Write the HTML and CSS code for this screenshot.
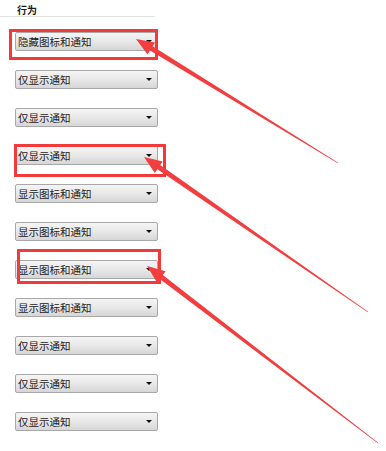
FILE: index.html
```html
<!DOCTYPE html>
<html lang="zh">
<head>
<meta charset="utf-8">
<link rel="stylesheet" href="styles.css">
</head>
<body>
<div class="page">
  <div class="header">行为</div>
  <div class="list">
    <div class="select"><span>隐藏图标和通知</span><i class="caret"></i></div>
    <div class="select"><span>仅显示通知</span><i class="caret"></i></div>
    <div class="select"><span>仅显示通知</span><i class="caret"></i></div>
    <div class="select"><span>仅显示通知</span><i class="caret"></i></div>
    <div class="select"><span>显示图标和通知</span><i class="caret"></i></div>
    <div class="select"><span>显示图标和通知</span><i class="caret"></i></div>
    <div class="select"><span>显示图标和通知</span><i class="caret"></i></div>
    <div class="select"><span>显示图标和通知</span><i class="caret"></i></div>
    <div class="select"><span>仅显示通知</span><i class="caret"></i></div>
    <div class="select"><span>仅显示通知</span><i class="caret"></i></div>
    <div class="select"><span>仅显示通知</span><i class="caret"></i></div>
  </div>
  <svg class="annot" width="386" height="451" viewBox="0 0 386 451" xmlns="http://www.w3.org/2000/svg">
    <g fill="none" stroke="#f33a3a" stroke-width="3">
      <rect x="10.5" y="30.5" width="146" height="28"/>
      <rect x="15.5" y="145.5" width="149" height="30"/>
      <rect x="18.5" y="250.5" width="141" height="32"/>
    </g>
    <g fill="#f23e3e">
      <polygon points="136,39 155.0,42.4 152.6,46.3 338.2,162.7 337.8,163.3 150.0,50.5 147.6,54.4"/>
      <polygon points="144,157 162.8,161.5 160.2,165.1 368.2,311.7 367.8,312.3 157.4,169.3 154.8,173.0"/>
      <polygon points="147,266 165.6,271.3 162.8,274.9 378.2,442.7 377.8,443.3 159.8,278.9 157.0,282.5"/>
    </g>
  </svg>
</div>
</body>
</html>
```
FILE: styles.css
```css
html, body {
  margin: 0;
  padding: 0;
  background: #ffffff;
}
.page {
  position: relative;
  width: 386px;
  height: 451px;
  overflow: hidden;
  font-family: "Noto Sans CJK SC", "Microsoft YaHei", sans-serif;
}
.header {
  box-sizing: border-box;
  width: 155px;
  height: 17px;
  padding: 3px 0 0 17px;
  border-bottom: 1px solid #e2e2e2;
  font-size: 10px;
  line-height: 13px;
  font-weight: bold;
  color: #1e1e1e;
}
.list {
  display: flex;
  flex-direction: column;
  gap: 19px;
  padding: 15px 0 0 15px;
}
.select {
  box-sizing: border-box;
  width: 143px;
  height: 19px;
  display: flex;
  align-items: center;
  justify-content: space-between;
  padding: 0 5px 0 2px;
  border: 1px solid #a8a8a8;
  border-radius: 2px;
  background: linear-gradient(#f5f5f5 0%, #e8e8e8 50%, #d6d6d6 100%);
  font-size: 10.5px;
  line-height: 17px;
  color: #222222;
}
.caret {
  width: 0;
  height: 0;
  border-left: 3px solid transparent;
  border-right: 3px solid transparent;
  border-top: 3px solid #111111;
}
.annot {
  position: absolute;
  left: 0;
  top: 0;
}
```
